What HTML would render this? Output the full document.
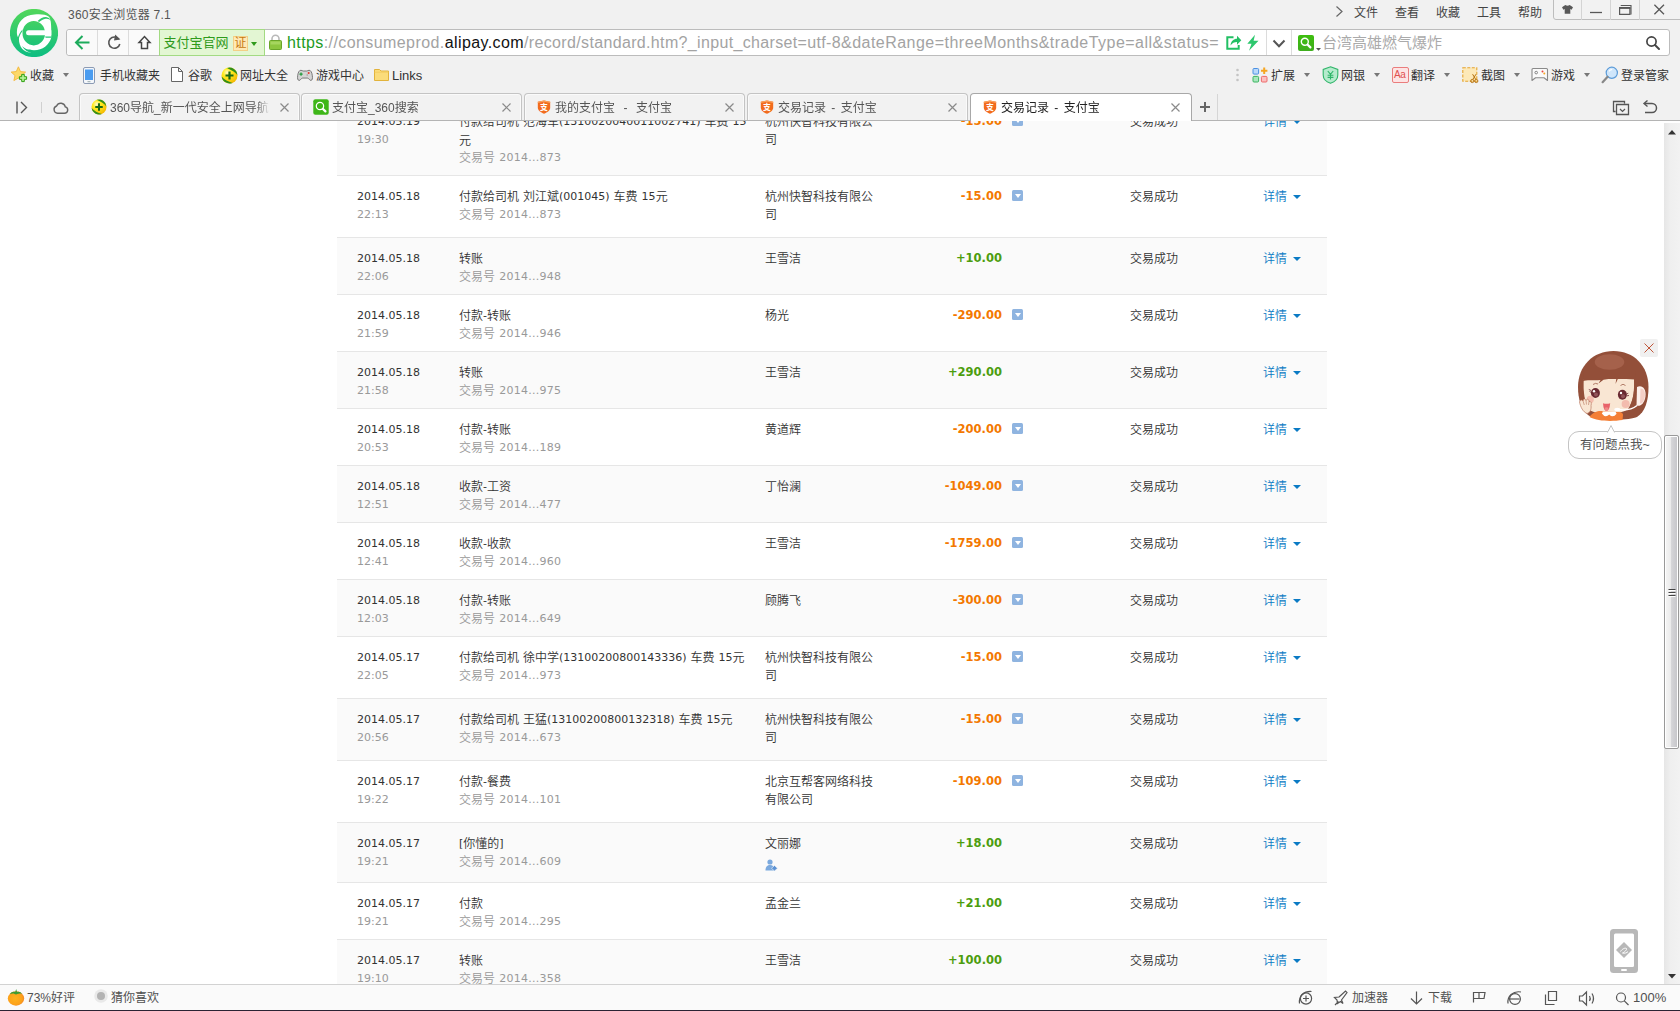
<!DOCTYPE html>
<html lang="zh-CN">
<head>
<meta charset="utf-8">
<title>交易记录 - 支付宝</title>
<style>
*{box-sizing:border-box;margin:0;padding:0}
html,body{width:1680px;height:1011px;overflow:hidden}
body{position:relative;background:#f1f1f1;font-family:"Liberation Sans","Noto Sans CJK SC",sans-serif;font-size:12px;color:#333}
.abs{position:absolute}
.ui{font-family:"Liberation Sans","Noto Sans CJK SC",sans-serif;font-size:12px;color:#333;white-space:nowrap;line-height:16px}
/* ---------- page content ---------- */
#page{position:absolute;left:0;top:121px;width:1680px;height:863px;background:#fff;overflow:hidden}
#tbl{position:absolute;left:337px;top:-20px;width:990px}
.row{position:relative;width:990px;border-bottom:1px solid #e6e6e6;background:#fff}
.row.g{background:#fafafa}
.row div{position:absolute;white-space:nowrap;line-height:18px;font-weight:350;font-family:"Liberation Sans","Noto Sans CJK SC",sans-serif;font-size:12px;color:#333}
.row i{font-style:normal;font-weight:400;font-family:"DejaVu Sans","Liberation Sans",sans-serif;font-size:11px;word-spacing:.5px}
.row .d{left:20px;top:11px}
.row .t{left:20px;top:29px;color:#999}
.row .n{left:122px;top:12px}
.row .o{left:122px;top:30px;color:#999}
.row .n i,.row .o i{position:relative;top:-1px}
.row .o i{letter-spacing:.25px}
.row .pi{left:428px;top:36px;width:13px;height:12px}
.row .p{left:428px;top:12px;width:112px;white-space:normal}
.row .a{right:325px;top:11px;font-family:"DejaVu Sans","Liberation Sans",sans-serif;font-weight:bold;font-size:11.5px;color:#f37800}
.row .a.in{color:#4c9d0e}
.row .i{left:675px;top:14px;width:11px;height:11px;background:#8fb4e0;border-radius:1.5px}
.row .i:after{content:"";position:absolute;left:2.5px;top:4px;border:3px solid transparent;border-top:4px solid #fff;border-bottom:0}
.row .s{left:793px;top:12px}
.row .l{left:926px;top:12px;color:#0a7ac4}
.row .l:after{content:"";position:absolute;left:30px;top:7px;border:4px solid transparent;border-top:4.5px solid #0a7ac4;border-bottom:0}

/* ---------- browser chrome ---------- */
#chrome{position:absolute;left:0;top:0;width:1680px;height:121px;background:#f1f1f1;border-bottom:1px solid #b4b4b4}
#chrome div,#chrome span,#chrome svg{position:absolute;white-space:nowrap}
.tx{font-family:"Liberation Sans","Noto Sans CJK SC",sans-serif;font-size:12px;line-height:16px;color:#333}
#title{left:68px;top:7px;color:#555;letter-spacing:.25px}
#menu span{top:5px;color:#444}
#wc{left:1553px;top:-1px;width:128px;height:21px;border:1px solid #bdbdbd;border-radius:0 0 0 3px;background:#f2f2f2}
#wc b{position:absolute;top:0;width:1px;height:20px;background:#d4d4d4}
#ab{left:66px;top:29px;width:1604px;height:27px;border:1px solid #bcbcbc;border-radius:3px;background:#fff}
#ab .nav{left:0;top:0;width:93px;height:25px;background:#fafafa;border-radius:3px 0 0 3px}
#ab .sp{top:0;width:1px;height:25px;background:#dcdcdc}
#cert{left:92px;top:-1px;width:106px;height:27px;background:#e3f6d3;border:1px solid #a3da83}
#cert .t{left:3.5px;top:4px;font-size:13px;line-height:18px;color:#2f9a1c;font-family:"Liberation Sans","Noto Sans CJK SC",sans-serif}
#cert .z{left:73px;top:6px;width:15px;height:15px;background:#ffe9b5;border:1px solid #f3cf86;color:#c67a12;font-size:12px;line-height:13px;text-align:center;font-family:"Liberation Sans","Noto Sans CJK SC",sans-serif}
#cert .ar{left:91px;top:12px;border:3px solid transparent;border-top:4px solid #2f9a1c;border-bottom:0}
#url{left:220px;top:2px;font-family:"Liberation Sans",sans-serif;font-size:16px;line-height:22px;color:#a3a3a3;letter-spacing:.41px}
#url .g{position:static;color:#1e9b1e}
#url .k{position:static;color:#111}
#url .u2{position:static;letter-spacing:.345px}
#url .u3{position:static;letter-spacing:.475px}
#sq{left:1231px;top:5px;width:16px;height:16px;background:linear-gradient(#3dbe0e,#3fae1e);border-radius:2px}
#stext{left:1255px;top:2px;font-size:15px;line-height:22px;color:#aaa;font-family:"Liberation Sans","Noto Sans CJK SC",sans-serif}
.bm{top:68px;font-size:12px;line-height:16px;color:#333;font-family:"Liberation Sans","Noto Sans CJK SC",sans-serif}
.car{border:3.800px solid transparent;border-top:4.200px solid #777;border-bottom:0}
.tab{top:93px;width:221px;height:27px;background:#f2f2f2;border:1px solid #c4c4c4;border-bottom:0;border-radius:4px 4px 0 0;box-shadow:inset 1px 1px 0 #fafafa,inset -1px 0 0 #fafafa}
.tab.on{background:#fff;border-color:#a8a8a8;height:28px;top:93px;width:222px;box-shadow:none}
.tab .tt{left:30px;top:6px;max-width:160px;overflow:hidden;-webkit-mask-image:linear-gradient(90deg,#000 146px,transparent 160px);mask-image:linear-gradient(90deg,#000 146px,transparent 160px);font-size:12px;line-height:16px;color:#555;font-family:"Liberation Sans","Noto Sans CJK SC",sans-serif}
.tab.on .tt{color:#222}
.tab .x{left:199px;top:8px;width:11px;height:11px}
.tab .ic{left:11px;top:5px;width:16px;height:16px}
/* ---------- status bar ---------- */
#status{position:absolute;left:0;top:984px;width:1680px;height:27px;background:#fafafa;border-top:1px solid #d2d2d2;border-bottom:1px solid #2b2233}
#status div,#status span{position:absolute;white-space:nowrap}
#status .tx{top:5px;color:#505050}
/* ---------- scrollbar ---------- */
#sb{position:absolute;left:1664px;top:123px;width:16px;height:861px;background:linear-gradient(90deg,#e6e6e6,#efefef 40%,#f2f2f2)}
#sb .th{position:absolute;left:0;top:312px;width:15px;height:314px;border:1px solid #999;border-radius:2px;box-shadow:inset 0 0 0 1px #fff;background:linear-gradient(90deg,#f6f6f6,#ececec 42%,#d6d6d9 48%,#c4c4c8)}
</style>
</head>
<body>
<!-- PAGE -->
<div id="page">
<div id="tbl">
<div class="row g" style="height:75px"><div class="d"><i>2014.05.19</i></div><div class="t"><i>19:30</i></div><div class="n">付款给司机<i> </i>范海军<i>(1310020040011002741) </i>车费<i> 15</i><br>元</div><div class="o" style="top:48px">交易号<i> 2014...873</i></div><div class="p">杭州快智科技有限公司</div><div class="a">-15.00</div><div class="i"></div><div class="s">交易成功</div><div class="l">详情</div></div>
<div class="row" style="height:62px"><div class="d"><i>2014.05.18</i></div><div class="t"><i>22:13</i></div><div class="n">付款给司机<i> </i>刘江斌<i>(001045) </i>车费<i> 15</i>元</div><div class="o" >交易号<i> 2014...873</i></div><div class="p">杭州快智科技有限公司</div><div class="a">-15.00</div><div class="i"></div><div class="s">交易成功</div><div class="l">详情</div></div>
<div class="row g" style="height:57px"><div class="d"><i>2014.05.18</i></div><div class="t"><i>22:06</i></div><div class="n">转账</div><div class="o" >交易号<i> 2014...948</i></div><div class="p">王雪洁</div><div class="a in">+10.00</div><div class="s">交易成功</div><div class="l">详情</div></div>
<div class="row" style="height:57px"><div class="d"><i>2014.05.18</i></div><div class="t"><i>21:59</i></div><div class="n">付款<i>-</i>转账</div><div class="o" >交易号<i> 2014...946</i></div><div class="p">杨光</div><div class="a">-290.00</div><div class="i"></div><div class="s">交易成功</div><div class="l">详情</div></div>
<div class="row g" style="height:57px"><div class="d"><i>2014.05.18</i></div><div class="t"><i>21:58</i></div><div class="n">转账</div><div class="o" >交易号<i> 2014...975</i></div><div class="p">王雪洁</div><div class="a in">+290.00</div><div class="s">交易成功</div><div class="l">详情</div></div>
<div class="row" style="height:57px"><div class="d"><i>2014.05.18</i></div><div class="t"><i>20:53</i></div><div class="n">付款<i>-</i>转账</div><div class="o" >交易号<i> 2014...189</i></div><div class="p">黄道辉</div><div class="a">-200.00</div><div class="i"></div><div class="s">交易成功</div><div class="l">详情</div></div>
<div class="row g" style="height:57px"><div class="d"><i>2014.05.18</i></div><div class="t"><i>12:51</i></div><div class="n">收款<i>-</i>工资</div><div class="o" >交易号<i> 2014...477</i></div><div class="p">丁怡澜</div><div class="a">-1049.00</div><div class="i"></div><div class="s">交易成功</div><div class="l">详情</div></div>
<div class="row" style="height:57px"><div class="d"><i>2014.05.18</i></div><div class="t"><i>12:41</i></div><div class="n">收款<i>-</i>收款</div><div class="o" >交易号<i> 2014...960</i></div><div class="p">王雪洁</div><div class="a">-1759.00</div><div class="i"></div><div class="s">交易成功</div><div class="l">详情</div></div>
<div class="row g" style="height:57px"><div class="d"><i>2014.05.18</i></div><div class="t"><i>12:03</i></div><div class="n">付款<i>-</i>转账</div><div class="o" >交易号<i> 2014...649</i></div><div class="p">顾腾飞</div><div class="a">-300.00</div><div class="i"></div><div class="s">交易成功</div><div class="l">详情</div></div>
<div class="row" style="height:62px"><div class="d"><i>2014.05.17</i></div><div class="t"><i>22:05</i></div><div class="n">付款给司机<i> </i>徐中学<i>(13100200800143336) </i>车费<i> 15</i>元</div><div class="o" >交易号<i> 2014...973</i></div><div class="p">杭州快智科技有限公司</div><div class="a">-15.00</div><div class="i"></div><div class="s">交易成功</div><div class="l">详情</div></div>
<div class="row g" style="height:62px"><div class="d"><i>2014.05.17</i></div><div class="t"><i>20:56</i></div><div class="n">付款给司机<i> </i>王猛<i>(13100200800132318) </i>车费<i> 15</i>元</div><div class="o" >交易号<i> 2014...673</i></div><div class="p">杭州快智科技有限公司</div><div class="a">-15.00</div><div class="i"></div><div class="s">交易成功</div><div class="l">详情</div></div>
<div class="row" style="height:62px"><div class="d"><i>2014.05.17</i></div><div class="t"><i>19:22</i></div><div class="n">付款<i>-</i>餐费</div><div class="o" >交易号<i> 2014...101</i></div><div class="p">北京互帮客网络科技有限公司</div><div class="a">-109.00</div><div class="i"></div><div class="s">交易成功</div><div class="l">详情</div></div>
<div class="row g" style="height:60px"><div class="d"><i>2014.05.17</i></div><div class="t"><i>19:21</i></div><div class="n"><i>[</i>你懂的<i>]</i></div><div class="o" >交易号<i> 2014...609</i></div><div class="p">文丽娜</div><div class="pi"><svg width="13" height="12" viewBox="0 0 13 12" style="display:block"><circle cx="5" cy="3" r="2.6" fill="#7ba9de"/><path d="M0.500 11.500 C0.500 7.500 2.500 6 5 6 C7.500 6 9 7.500 9 9 L9 11.500Z" fill="#7ba9de"/><path d="M9.500 6.500 L12.500 9.300 L9.500 12 L6.500 9.300Z" fill="#5d93d4" stroke="#fafafa" stroke-width=".6"/></svg></div><div class="a in">+18.00</div><div class="s">交易成功</div><div class="l">详情</div></div>
<div class="row" style="height:57px"><div class="d"><i>2014.05.17</i></div><div class="t"><i>19:21</i></div><div class="n">付款</div><div class="o" >交易号<i> 2014...295</i></div><div class="p">孟金兰</div><div class="a in">+21.00</div><div class="s">交易成功</div><div class="l">详情</div></div>
<div class="row g" style="height:57px"><div class="d"><i>2014.05.17</i></div><div class="t"><i>19:10</i></div><div class="n">转账</div><div class="o" >交易号<i> 2014...358</i></div><div class="p">王雪洁</div><div class="a in">+100.00</div><div class="s">交易成功</div><div class="l">详情</div></div>
</div>
</div>
<!-- BROWSER CHROME -->
<div id="chrome">
<svg class="abs" style="left:10px;top:9px" width="48" height="48" viewBox="0 0 48 48">
<defs><radialGradient id="g360" cx=".36" cy=".32" r=".75"><stop offset="0" stop-color="#fffbd0"/><stop offset=".35" stop-color="#ffec1f"/><stop offset="1" stop-color="#f3b400"/></radialGradient><linearGradient id="lg" x1="0" y1="0" x2="0" y2="1"><stop offset="0" stop-color="#52d75a"/><stop offset="1" stop-color="#0dbd82"/></linearGradient></defs>
<circle cx="24" cy="24" r="24.1" fill="url(#lg)"/>
<g transform="scale(0.05935) translate(-99.4,-96.9)">
<path fill-rule="evenodd" fill="#fff" d="M215 490 C215 320 340 195 510 190 C600 180 700 185 750 225 C780 250 795 300 795 490 L795 575 C760 700 650 790 505 790 C400 790 330 760 305 715 C320 770 380 815 460 832 C330 835 250 740 250 600 C225 570 215 530 215 490Z M310 505 A190 205 0 1 0 690 505 A190 205 0 1 0 310 505Z"/>
<path fill="#fff" d="M412 455 H795 V540 H412 A42 42.500 0 0 1 412 455Z"/>
<path fill="#2fcb6c" d="M565 300 C620 250 670 225 720 235 C760 245 785 270 795 300 C770 270 740 258 700 262 C660 268 620 290 590 318Z"/>
<path fill="#25c871" d="M312 440 C270 490 240 540 226 600 L246 610 C255 560 275 515 305 478Z"/>
<path d="M690 560 L800 560 L800 580 L700 580Z" fill="#22c774"/>
</g>
</svg>
<div id="title" class="tx">360安全浏览器 7.1</div>
<div id="menu">
<svg class="abs" style="left:1335px;top:5px" width="9" height="13" viewBox="0 0 9 13"><path d="M1.5 1.5 L7 6.5 L1.5 11.5" fill="none" stroke="#666" stroke-width="1.2"/></svg>
<span class="tx" style="left:1354px">文件</span><span class="tx" style="left:1395px">查看</span><span class="tx" style="left:1436px">收藏</span><span class="tx" style="left:1477px">工具</span><span class="tx" style="left:1518px">帮助</span>
</div>
<div id="wc">
<b style="left:27px"></b><b style="left:56px"></b><b style="left:85px"></b>
<svg class="abs" style="left:0;top:0" width="127" height="19" viewBox="0 0 127 19">
<path d="M8 7.200 L11.300 5 Q13.500 6.600 15.700 5 L19 7.200 L17.600 9.700 L16.300 9 V13.800 H10.700 V9 L9.400 9.700Z" fill="#585858"/>
<path d="M36 12.500 H48" stroke="#585858" stroke-width="1.300"/>
<path d="M65.600 8 H75.900 V14.400 H65.600Z" fill="none" stroke="#585858" stroke-width="1.200"/><path d="M65 7.900 H76.500" stroke="#585858" stroke-width="1.800"/><path d="M66.700 5.500 H77 V14.500" fill="none" stroke="#585858" stroke-width="1.100"/>
<path d="M100.400 4.800 L110 14.200 M110 4.800 L100.400 14.200" stroke="#585858" stroke-width="1.300"/>
</svg>
</div>
<!-- address bar -->
<div id="ab">
<div class="nav"></div>
<div class="sp" style="left:30px"></div><div class="sp" style="left:61px"></div>
<svg class="abs" style="left:0;top:0" width="93" height="25" viewBox="0 0 93 25">
<path d="M22.5 12.5 H9.5 M15.5 6 L9 12.5 L15.5 19" fill="none" stroke="#1dab5c" stroke-width="2" stroke-linejoin="miter"/>
<path d="M51.8 9.2 A5.6 5.6 0 1 0 52.8 14" fill="none" stroke="#555" stroke-width="1.6"/>
<path d="M48.2 4.6 L53.4 9.6 L47 10.6Z" fill="#555"/>
<path d="M72 12.5 L77.5 6.5 L83 12.5 H80.5 V18.5 H74.5 V12.5Z" fill="none" stroke="#444" stroke-width="1.5" stroke-linejoin="miter"/>
</svg>
<div id="cert"><span class="t">支付宝官网</span><span class="z">证</span><span class="ar"></span></div>
<svg class="abs" style="left:202px;top:4px" width="13" height="16" viewBox="0 0 13 16">
<path d="M3 7 V4.8 A3.5 3.5 0 0 1 10 4.8 V7" fill="none" stroke="#b9b9b9" stroke-width="1.6"/>
<rect x="0.5" y="6.5" width="12" height="9" rx="1" fill="#8cc63f" stroke="#6aa52a"/>
<rect x="1.5" y="7.5" width="10" height="3" fill="#a5d65f"/>
</svg>
<div id="url"><span class="g">https</span>://consumeprod.<span class="k">alipay.com</span><span class="u2">/record/standard.htm?_input_charset=utf-8</span><span class="u3">&amp;dateRange=threeMonths&amp;tradeType=all&amp;status=</span></div>
<svg class="abs" style="left:1158px;top:4px" width="36" height="18" viewBox="0 0 36 18">
<path d="M8.500 3.300 H2.300 V14.700 H13.700 V11" fill="none" stroke="#22c064" stroke-width="2"/>
<path d="M5.500 11.500 C6 7 8.800 4.800 12 4.800 V1.800 L16.300 6.300 L12 10.800 V8 C9.300 8 7.200 9 5.500 11.500Z" fill="#22c064"/>
<path d="M30 .8 L22.300 9.800 H26.500 L24 16.800 L33.500 6.800 H28.600Z" fill="#2dc76d"/>
</svg>
<div class="sp" style="left:1199px"></div><div class="sp" style="left:1224px"></div>
<svg class="abs" style="left:1204px;top:8px" width="16" height="12" viewBox="0 0 16 12"><path d="M2.500 2.500 L8 8.300 L13.500 2.500" fill="none" stroke="#555" stroke-width="2"/></svg>
<div id="sq"></div>
<svg class="abs" style="left:1231px;top:5px" width="30" height="19" viewBox="0 0 30 19">
<circle cx="6.800" cy="6.800" r="3.500" fill="none" stroke="#fff" stroke-width="1.400"/><path d="M9.700 9.700 L12.400 12.400" stroke="#fff" stroke-width="2.200" stroke-linecap="round"/>
<path d="M18 13 L23 13 L20.500 15.800Z" fill="#555"/>
</svg>
<div id="stext">台湾高雄燃气爆炸</div>
<svg class="abs" style="left:1578px;top:5px" width="16" height="16" viewBox="0 0 16 16"><circle cx="6.5" cy="6.5" r="4.6" fill="none" stroke="#444" stroke-width="1.7"/><path d="M10 10 L14 14" stroke="#444" stroke-width="2" stroke-linecap="round"/></svg>
</div>
<!-- bookmarks bar -->
<div id="bmbar">
<svg class="abs" style="left:11px;top:66px" width="17" height="17" viewBox="0 0 17 17">
<path d="M7.400 0.800 L9.500 5.600 L14.600 6.100 L10.800 9.500 L11.900 14.600 L7.400 12 L2.900 14.600 L4 9.500 L0.200 6.100 L5.300 5.600Z" fill="#fcd96a" stroke="#f3b73a" stroke-width=".9" stroke-linejoin="round"/>
<path d="M10.700 8.400 H13.300 V10.700 H15.600 V13.300 H13.300 V15.600 H10.700 V13.300 H8.400 V10.700 H10.700Z" fill="#b3f296" stroke="#2f9f12" stroke-width="1"/>
</svg>
<span class="bm" style="left:30px">收藏</span>
<span class="car" style="left:63px;top:73px"></span>
<svg class="abs" style="left:83px;top:67px" width="12" height="17" viewBox="0 0 12 17">
<rect x=".5" y=".5" width="11" height="16" rx="1.5" fill="#f4f7fb" stroke="#8c9bb4"/><rect x="2" y="2.5" width="8" height="10.5" fill="#4a9cf0"/><rect x="4.5" y="14.2" width="3" height="1" fill="#9aa"/>
</svg>
<span class="bm" style="left:100px">手机收藏夹</span>
<svg class="abs" style="left:171px;top:67px" width="12" height="15" viewBox="0 0 12 15"><path d="M.5 .5 H7.5 L11.5 4.5 V14.5 H.5Z M7.5 .5 V4.5 H11.5" fill="#fff" stroke="#666" stroke-width="1"/></svg>
<span class="bm" style="left:188px">谷歌</span>
<svg class="abs ic360" style="left:220.500px;top:66.500px" width="17" height="17" viewBox="0 0 17 17">
<circle cx="8.500" cy="8.500" r="8" fill="url(#g360)"/><path d="M6 .900 A8 8 0 0 1 16.400 8 C14.200 5 10.800 3.200 6 .900Z" fill="#2f8f1b"/><path d="M.600 9.500 A8 8 0 0 0 11.500 15.900 C7 14.600 3.500 12.700 .600 9.500Z" fill="#2f8f1b"/>
<path d="M8.500 4.500 V12.500 M4.500 8.500 H12.500" stroke="#1b6912" stroke-width="2.200"/>
</svg>
<span class="bm" style="left:240px">网址大全</span>
<svg class="abs" style="left:297px;top:68.500px" width="16" height="12.500" viewBox="0 0 17 13">
<path d="M4.200 1.200 C2.200 1.200 1.200 3.500 .700 7 C.300 10 .800 12 2.300 12 C3.800 12 4.300 9.500 6 9.500 H11 C12.700 9.500 13.200 12 14.700 12 C16.200 12 16.700 10 16.300 7 C15.800 3.500 14.800 1.200 12.800 1.200 C11.800 1.200 11.400 2 10.400 2 H6.600 C5.600 2 5.200 1.200 4.200 1.200Z" fill="#d4d4d4" stroke="#666" stroke-width=".9"/>
<path d="M4.300 3.600 V7 M2.600 5.300 H6" stroke="#1e9a3a" stroke-width="1.300"/><circle cx="12.400" cy="4.200" r="1.100" fill="#e8332c"/><circle cx="10.800" cy="6.300" r=".8" fill="#999"/>
</svg>
<span class="bm" style="left:316px">游戏中心</span>
<svg class="abs" style="left:374px;top:68px" width="15" height="13" viewBox="0 0 15 13"><path d="M.5 12.5 V1.5 H5.5 L7 3 H14.5 V12.5Z" fill="#fbdc7a" stroke="#e2b33c"/><path d="M.5 4.2 H14.5" stroke="#f3c95a" stroke-width=".8"/></svg>
<span class="bm" style="left:392px;font-size:13px">Links</span>
<!-- right side -->
<svg class="abs" style="left:1236px;top:68px" width="3" height="14" viewBox="0 0 3 14"><circle cx="1.5" cy="2" r="1.300" fill="#c4c4c4"/><circle cx="1.5" cy="7" r="1.300" fill="#c4c4c4"/><circle cx="1.5" cy="12" r="1.300" fill="#c4c4c4"/></svg>
<svg class="abs" style="left:1252px;top:67px" width="17" height="16" viewBox="0 0 17 16">
<rect x="1" y="1.5" width="5.6" height="5.6" rx="1" fill="#b9d8fb" stroke="#4a90e2"/><rect x="1" y="9.4" width="5.6" height="5.6" rx="1" fill="#a9e6bd" stroke="#3bb560"/><rect x="9.4" y="9.4" width="5.6" height="5.6" rx="1" fill="#fbc0c0" stroke="#ee6a6a"/>
<path d="M12.2 .6 V7 M9 3.8 H15.4" stroke="#f5a623" stroke-width="2"/>
</svg>
<span class="bm" style="left:1271px">扩展</span><span class="car" style="left:1304px;top:73px"></span>
<svg class="abs" style="left:1322px;top:66px" width="17" height="18" viewBox="0 0 17 18">
<path d="M8.5 .8 L15.8 3.4 V9 C15.8 13 12.5 16 8.5 17.3 C4.5 16 1.2 13 1.2 9 V3.4Z" fill="#b5ebcd" stroke="#2fb569" stroke-width="1.1"/>
<path d="M5.8 5 L8.5 8.3 L11.2 5 M8.5 8.3 V13.6 M5.6 9.2 H11.4 M5.6 11.4 H11.4" fill="none" stroke="#2fb569" stroke-width="1.1"/>
</svg>
<span class="bm" style="left:1341px">网银</span><span class="car" style="left:1374px;top:73px"></span>
<svg class="abs" style="left:1392px;top:67px" width="17" height="16" viewBox="0 0 17 16"><rect x=".5" y=".5" width="16" height="15" rx="1.5" fill="#fde4e4" stroke="#ea7d7d"/></svg>
<span class="abs" style="left:1394px;top:69px;font-family:'Liberation Sans',sans-serif;font-size:10px;line-height:12px;color:#e0504f;letter-spacing:-.3px">Aa</span>
<span class="bm" style="left:1411px">翻译</span><span class="car" style="left:1444px;top:73px"></span>
<svg class="abs" style="left:1462px;top:66px" width="18" height="18" viewBox="0 0 18 18">
<rect x=".8" y="1.8" width="14" height="13.4" fill="#fde9b8" stroke="#e6a52f" stroke-width="1.1" stroke-dasharray="3 1.5"/>
<circle cx="10.3" cy="15" r="1.6" fill="none" stroke="#b87412" stroke-width="1"/><circle cx="14.3" cy="15" r="1.6" fill="none" stroke="#b87412" stroke-width="1"/><path d="M10.8 13.5 L14 8.2 M13.8 13.5 L10.6 8.2" stroke="#b87412" stroke-width="1"/>
</svg>
<span class="bm" style="left:1481px">截图</span><span class="car" style="left:1514px;top:73px"></span>
<svg class="abs" style="left:1531px;top:67px" width="18" height="16" viewBox="0 0 18 16">
<path d="M1 2.5 Q1 1.5 2 1.5 H15.5 Q16.5 1.5 16.5 2.5 V13.5 L13 10.8 H4.5 L1 13.5Z" fill="#fafafa" stroke="#8a8a8a" stroke-width="1.1" stroke-linejoin="round"/>
<circle cx="5.2" cy="5.6" r="1.3" fill="none" stroke="#777" stroke-width=".9"/><circle cx="11.5" cy="4.6" r="1" fill="#e8453c"/><circle cx="13.3" cy="6.6" r="1" fill="#f5a623"/>
</svg>
<span class="bm" style="left:1551px">游戏</span><span class="car" style="left:1584px;top:73px"></span>
<svg class="abs" style="left:1601px;top:66px" width="18" height="18" viewBox="0 0 18 18">
<circle cx="10.8" cy="6.8" r="5.6" fill="#cfe6fb" stroke="#5b9bd8" stroke-width="1.2"/><path d="M8 5.4 A3.4 3.4 0 0 1 11.2 3.6" fill="none" stroke="#fff" stroke-width="1.2"/>
<path d="M6.6 10.8 L1.6 16.2" stroke="#888" stroke-width="2.2" stroke-linecap="round"/>
</svg>
<span class="bm" style="left:1621px">登录管家</span>
</div>
<!-- tabs -->
<div id="tabs">
<svg class="abs" style="left:14px;top:99px" width="60" height="17" viewBox="0 0 60 17">
<path d="M3 2.5 V14.5 M7 3 L12.5 8.5 L7 14" fill="none" stroke="#555" stroke-width="1.4"/>
<path d="M27.5 3 V14" stroke="#d0d0d0" stroke-width="1"/>
<path d="M43.5 14.2 H50.5 A3.2 3.2 0 0 0 51.3 7.9 A4.6 4.6 0 0 0 42.6 7 A3.7 3.7 0 0 0 43.5 14.2Z" fill="none" stroke="#666" stroke-width="1.4"/>
</svg>
<div class="tab" style="left:79px"><svg class="ic" viewBox="0 0 17 17"><circle cx="8.500" cy="8.500" r="8" fill="url(#g360)"/><path d="M6 .900 A8 8 0 0 1 16.400 8 C14.200 5 10.800 3.200 6 .900Z" fill="#2f8f1b"/><path d="M.600 9.500 A8 8 0 0 0 11.500 15.900 C7 14.600 3.500 12.700 .600 9.500Z" fill="#2f8f1b"/><path d="M8.500 4.500 V12.500 M4.500 8.500 H12.500" stroke="#1b6912" stroke-width="2.200"/></svg><span class="tt">360导航_新一代安全上网导航</span><svg class="x" viewBox="0 0 11 11"><path d="M1.5 1.5 L9.5 9.5 M9.5 1.5 L1.5 9.5" stroke="#8a8a8a" stroke-width="1.2"/></svg></div>
<div class="tab" style="left:301px"><svg class="ic" viewBox="0 0 17 17"><rect x=".3" y=".3" width="16.400" height="16.400" rx="2.200" fill="#3eb618"/><circle cx="7.400" cy="7.400" r="3.900" fill="none" stroke="#fff" stroke-width="1.300"/><path d="M10.600 10.600 L13.200 13.200" stroke="#fff" stroke-width="2.400" stroke-linecap="round"/></svg><span class="tt">支付宝_360搜索</span><svg class="x" viewBox="0 0 11 11"><path d="M1.5 1.5 L9.5 9.5 M9.5 1.5 L1.5 9.5" stroke="#8a8a8a" stroke-width="1.2"/></svg></div>
<div class="tab" style="left:524px"><svg class="ic" viewBox="-1.200 -0.600 19.400 18.200"><path d="M1 2.2 L8.5 .6 L16 2.2 V9.5 C16 12.6 12.6 15.2 8.5 16.6 C4.4 15.2 1 12.6 1 9.5Z" fill="#f26b1d"/><path d="M1 2.2 L8.5 .6 L16 2.2 V3.6 L8.5 2 L1 3.6Z" fill="#f9a25e"/><text x="8.5" y="12" font-size="9.5" font-weight="bold" text-anchor="middle" fill="#fff" font-family="Noto Sans CJK SC,sans-serif">支</text></svg><span class="tt" style="word-spacing:.9px">我的支付宝&nbsp; -&nbsp; 支付宝</span><svg class="x" viewBox="0 0 11 11"><path d="M1.5 1.5 L9.5 9.5 M9.5 1.5 L1.5 9.5" stroke="#8a8a8a" stroke-width="1.2"/></svg></div>
<div class="tab" style="left:747px"><svg class="ic" viewBox="-1.200 -0.600 19.400 18.200"><path d="M1 2.2 L8.5 .6 L16 2.2 V9.5 C16 12.6 12.6 15.2 8.5 16.6 C4.4 15.2 1 12.6 1 9.5Z" fill="#f26b1d"/><path d="M1 2.2 L8.5 .6 L16 2.2 V3.6 L8.5 2 L1 3.6Z" fill="#f9a25e"/><text x="8.5" y="12" font-size="9.5" font-weight="bold" text-anchor="middle" fill="#fff" font-family="Noto Sans CJK SC,sans-serif">支</text></svg><span class="tt" style="word-spacing:2px">交易记录 - 支付宝</span><svg class="x" viewBox="0 0 11 11"><path d="M1.5 1.5 L9.5 9.5 M9.5 1.5 L1.5 9.5" stroke="#8a8a8a" stroke-width="1.2"/></svg></div>
<div class="tab on" style="left:970px"><svg class="ic" viewBox="-1.200 -0.600 19.400 18.200"><path d="M1 2.2 L8.5 .6 L16 2.2 V9.5 C16 12.6 12.6 15.2 8.5 16.6 C4.4 15.2 1 12.6 1 9.5Z" fill="#f26b1d"/><path d="M1 2.2 L8.5 .6 L16 2.2 V3.6 L8.5 2 L1 3.6Z" fill="#f9a25e"/><text x="8.5" y="12" font-size="9.5" font-weight="bold" text-anchor="middle" fill="#fff" font-family="Noto Sans CJK SC,sans-serif">支</text></svg><span class="tt" style="word-spacing:2px">交易记录 - 支付宝</span><svg class="x" viewBox="0 0 11 11"><path d="M1.5 1.5 L9.5 9.5 M9.5 1.5 L1.5 9.5" stroke="#8a8a8a" stroke-width="1.2"/></svg></div>
<svg class="abs" style="left:1198px;top:100px" width="14" height="14" viewBox="0 0 14 14"><path d="M7 2 V12 M2 7 H12" stroke="#666" stroke-width="2"/></svg>
<div class="abs" style="left:1217px;top:94px;width:1px;height:26px;background:#d6d6d6"></div>
<svg class="abs" style="left:1612px;top:100px" width="48" height="16" viewBox="0 0 48 16">
<path d="M3.5 11.5 H1.5 V1.5 H12.5 V3.5 M4.5 4.5 H16.5 V14.5 H4.5Z" fill="none" stroke="#555" stroke-width="1.3"/><path d="M8 9 L10.5 11.5 L13 9" fill="none" stroke="#555" stroke-width="1.2"/>
<path d="M33 3.5 H40 A4.5 4.5 0 0 1 40 12.5 H33" fill="none" stroke="#555" stroke-width="1.5"/><path d="M35.5 .5 L32 3.5 L35.5 6.5" fill="none" stroke="#555" stroke-width="1.4"/>
</svg>
</div>
</div>
<!-- SCROLLBAR -->
<div id="sb"><div class="th"></div>
<svg class="abs" style="left:0;top:0" width="16" height="861" viewBox="0 0 16 861">
<path d="M4 11.5 L8 7 L12 11.5Z" fill="#333"/><path d="M4 851 L12 851 L8 855.5Z" fill="#333"/>
<path d="M4.5 466.5 H11.5 M4.5 469.5 H11.5 M4.5 472.5 H11.5" stroke="#444" stroke-width="1"/>
<path d="M4.5 467.5 H11.5 M4.5 470.5 H11.5 M4.5 473.5 H11.5" stroke="#fff" stroke-width="1"/>
</svg>
</div>
<!-- FLOATING HELPER -->
<div id="helper">
<div class="abs" style="left:1640px;top:339px;width:18px;height:18px;background:#f0f0f0;border-radius:2px"></div>
<svg class="abs" style="left:1640px;top:339px" width="18" height="18" viewBox="0 0 18 18"><path d="M4.5 4.5 L13.5 13.5 M13.5 4.5 L4.5 13.5" stroke="#c0563a" stroke-width="1"/></svg>
<svg class="abs" style="left:1576px;top:349px" width="74" height="73" viewBox="0 0 74 73">
<path d="M37.500 2 C58 2 72.500 17 72.500 38 C72.500 52 69 63 61 68 C54 71.500 20 72 12 66 C5 60 2 50 2 38 C2 17 17 2 37.500 2Z" fill="#934f39"/>
<ellipse cx="33.500" cy="13" rx="14.800" ry="7.700" fill="#a5614b"/>
<path d="M7.800 30 L58 30 C59 40 57.500 52 52 60 C46 66 20 66 13.500 61 C8.500 54 7 42 7.800 30Z" fill="#f9e6d3"/>
<path d="M7 32 C10 30.500 17 31.500 24.500 31 L22.500 34.500 L27.500 30.800 C32 30 36 29.500 40.500 28.500 L39.500 35 L42.500 28.500 C47 29.500 53 30.500 59 30.500 L60 22 L8 22Z" fill="#934f39"/>
<path d="M58 30 C58.500 40 57.500 50 54 57 L60 60 L63 40Z" fill="#934f39"/>
<ellipse cx="19.400" cy="44" rx="4.500" ry="5" fill="#6a2a32"/><ellipse cx="46.400" cy="45.800" rx="4.500" ry="5" fill="#6a2a32"/>
<circle cx="20" cy="45.500" r="2" fill="#92545a"/><circle cx="47" cy="47.300" r="2" fill="#92545a"/>
<circle cx="18" cy="42.200" r="1.200" fill="#fff"/><circle cx="45" cy="44" r="1.200" fill="#fff"/>
<path d="M13.500 42.500 L15.500 43.500 M12.800 40.500 L15 41.500" stroke="#6a2a32" stroke-width=".8"/><path d="M52.300 44.200 L50.500 45 M53 46.500 L51 46.800" stroke="#6a2a32" stroke-width=".8"/>
<path d="M17 35.500 Q19.500 33.500 22 35" fill="none" stroke="#934f39" stroke-width=".7"/><path d="M44.500 36.500 Q47 34 49.500 36.500" fill="none" stroke="#934f39" stroke-width=".7"/>
<circle cx="14.200" cy="50.400" r="3.600" fill="#f3bcae"/><circle cx="49.600" cy="54.900" r="4" fill="#f3bcae"/>
<path d="M27 54.200 Q30.500 55.200 34.200 54.200 Q33.500 62 30.500 62 Q27.500 62 27 54.200Z" fill="#e8636a"/><path d="M28.500 59 Q30.500 57.500 32.500 59 Q31.800 62 30.500 62 Q29 62 28.500 59Z" fill="#f08a86"/>
<path d="M13.500 68 C18 62 24 61.500 27 62.500 L41 63 C45 62.500 47.500 64 47 66 L46.500 71 C36 72.500 22 72.500 13.500 68Z" fill="#f47f36"/>
<path d="M25.800 64.500 Q29.500 69.500 33.200 65.500 Q37 69.500 40.600 64.800 L39.500 62.800 H27Z" fill="#fff"/>
<path d="M61 38 C66 35.500 70.500 40 69.500 47.500 C68.500 54.500 64 58 60.500 56.500Z" fill="#fcefea"/><path d="M64.500 39.500 C68.500 39.500 69.800 44.500 68.500 49 C67.500 53 65.500 55 64 54.500Z" fill="#f4cfc6"/>
<path d="M61 56.500 C56 60.500 48 61.500 42 60.500" fill="none" stroke="#fff" stroke-width="1.600"/><ellipse cx="41.300" cy="60.400" rx="3" ry="1.700" fill="#fff"/>
<path d="M3.500 53 C4.500 50.500 6 50.500 7 52 C7.500 49.500 9.500 49.500 10 51.500 C11 49.500 13 50 13 52.500 C15 52 15.800 54 15 56.500 C15.500 60.500 14 64 11 64.500 C7 63 4.500 58 3.500 53Z" fill="#f9e6d3" stroke="#b9775f" stroke-width=".7"/>
<path d="M7 52 L8.300 56 M10 51.500 L10.500 55.500 M13 52.500 L12.500 56" stroke="#b9775f" stroke-width=".6" fill="none"/>
</svg>
<div class="abs" style="left:1568px;top:431px;width:94px;height:28px;border:1px solid #c4c4c4;border-radius:11px;background:#fff"></div>
<svg class="abs" style="left:1603px;top:424px" width="16" height="9" viewBox="0 0 16 9"><path d="M4.500 8.500 L8 1.500 L11.500 8.500" fill="#fff" stroke="#c4c4c4" stroke-width="1"/><rect x="5" y="7.600" width="6" height="1.400" fill="#fff"/></svg>
<div class="abs" style="left:1568px;top:436px;width:94px;text-align:center;font-size:12.5px;line-height:18px;color:#555;font-family:'Liberation Sans','Noto Sans CJK SC',sans-serif">有问题点我~</div>
<!-- phone -->
<svg class="abs" style="left:1610px;top:929px" width="28" height="44" viewBox="0 0 28 44">
<rect x="0" y="0" width="28" height="44" rx="3.5" fill="#b8b8b8"/><rect x="4" y="4.5" width="20" height="33.5" rx="1.5" fill="#fff"/>
<path d="M14 13 L22 21 L14 29 L6 21Z" fill="#b8b8b8"/><rect x="11" y="40" width="6" height="2" rx="1" fill="#fff"/>
<path d="M10.5 22.5 C12 20 15 18.5 16.5 19.5 C17.5 20.5 14 23.5 12.5 24 C14.5 24.5 17 24 18 22.5" fill="none" stroke="#fff" stroke-width="1"/>
</svg>
</div>
<!-- STATUS BAR -->
<div id="status">
<svg class="abs" style="left:7px;top:3px" width="18" height="18" viewBox="0 0 18 18">
<defs><radialGradient id="tg" cx=".45" cy=".5" r=".6"><stop offset="0" stop-color="#ffb21e"/><stop offset=".7" stop-color="#fca21a"/><stop offset="1" stop-color="#f27e2a"/></radialGradient></defs>
<ellipse cx="9" cy="10.5" rx="8.2" ry="7.2" fill="url(#tg)"/>
<path d="M9.2 1 L10 4 C12 3.2 14 4 15 5.8 C13 5.2 11.6 5.4 10.4 6 C9.6 6.6 8.4 6.6 7.6 6 C6.4 5.4 5 5.4 3 6.2 C4 4.2 6 3.4 8.2 4Z" fill="#3d9b35"/>
</svg>
<span class="tx" style="left:27px">73%好评</span>
<svg class="abs" style="left:94px;top:4px" width="14" height="14" viewBox="0 0 14 14"><circle cx="7" cy="7" r="6.8" fill="#e9e9e9"/><circle cx="7" cy="7" r="4" fill="#b3b3b3"/></svg>
<span class="tx" style="left:111px">猜你喜欢</span>
<svg class="abs" style="left:1296px;top:3px" width="374" height="20" viewBox="0 0 374 20">
<g fill="none" stroke="#555" stroke-width="1.2">
<circle cx="10" cy="10.5" r="5.6"/><path d="M3.5 15.5 C2.5 8 8 3 15.5 3.5"/><path d="M10 7.5 V13.5 M7 10.5 H13"/>
<path d="M39 17 L42.5 13.5 M43 9 L49.5 3 L51 4.5 L45.5 12 L47 15.5 L44.5 13.5 L41.5 15.5 L41 12 L38.5 9.5Z"/>
<path d="M120.5 3.5 V15.5 M115 10.5 L120.5 16 L126 10.5"/>
<path d="M177.500 14.500 V4.500 H189 L188 10.500 H177.500"/><path d="M183 4.500 V10.500"/>
<circle cx="219" cy="11" r="5.400"/><path d="M213.600 11 H223.500"/><path d="M212 15.500 C211 8.500 217 2.500 225 4"/>
<path d="M252.500 3.500 H260.500 V12.500 H252.500Z M249.500 6.500 V16.500 H258.500"/>
<path d="M283.500 8 H286.500 L290.500 4 V17 L286.500 13 H283.500Z M293.500 8 Q295 10.500 293.500 13 M296 5.500 Q299 10.500 296 15.500"/>
<circle cx="325" cy="9.5" r="4.500"/><path d="M328.300 12.800 L332.500 17"/>
</g></svg>
<span class="tx" style="left:1352px">加速器</span><span class="tx" style="left:1428px">下载</span><span class="tx" style="left:1633px;font-size:13px">100%</span>
</div>
</body>
</html>
